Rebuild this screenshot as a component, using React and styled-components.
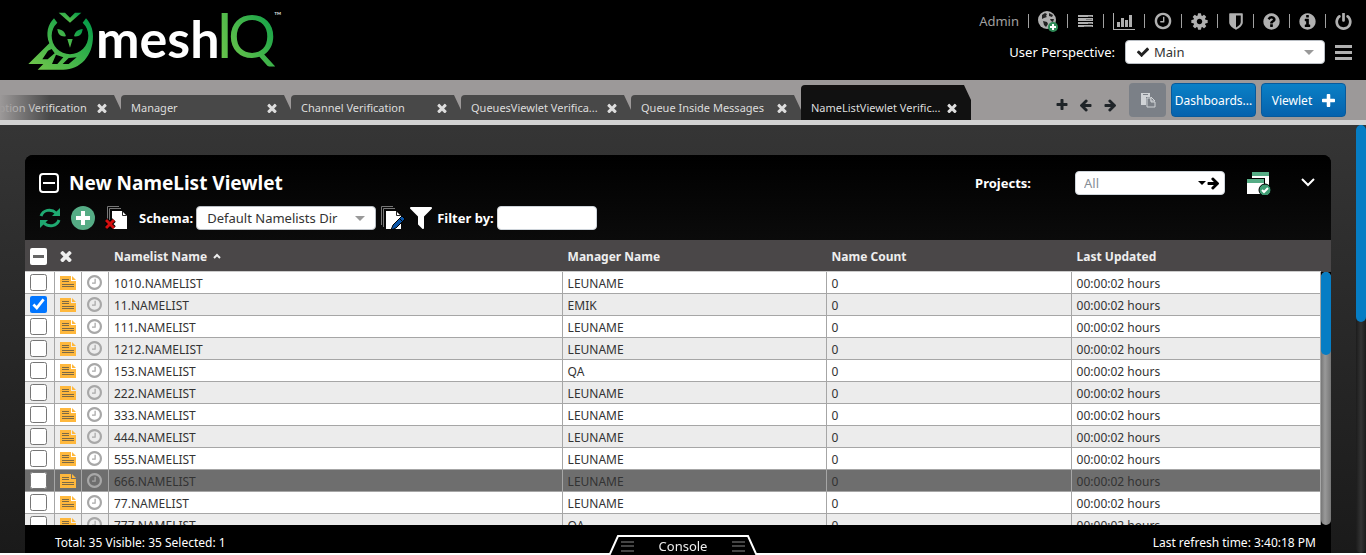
import React, { useState } from "react";
import styled, { createGlobalStyle, css } from "styled-components";

const GlobalStyle = createGlobalStyle`
  *, *::before, *::after { box-sizing: border-box; }
  html, body { margin: 0; padding: 0; background: #fff; }
  body, button, input, select {
    font-family: "Noto Sans", "Open Sans", sans-serif;
    font-size: 13px;
  }
  button { margin: 0; padding: 0; border: 0; background: none; color: inherit; cursor: pointer; }
  svg { display: block; flex: none; }
`;

/* ---------- icons ---------- */

const ICONS = {
  times: "M1490 1322q0 40-28 68l-136 136q-28 28-68 28t-68-28l-294-294-294 294q-28 28-68 28t-68-28l-136-136q-28-28-28-68t28-68l294-294-294-294q-28-28-28-68t28-68l136-136q28-28 68-28t68 28l294 294 294-294q28-28 68-28t68 28l136 136q28 28 28 68t-28 68l-294 294 294 294q28 28 28 68z",
  plus: "M1600 736v192q0 40-28 68t-68 28h-416v416q0 40-28 68t-68 28h-192q-40 0-68-28t-28-68v-416h-416q-40 0-68-28t-28-68v-192q0-40 28-68t68-28h416v-416q0-40 28-68t68-28h192q40 0 68 28t28 68v416h416q40 0 68 28t28 68z",
  check: "M1671 566q0 40-28 68l-724 724-136 136q-28 28-68 28t-68-28l-136-136-362-362q-28-28-28-68t28-68l136-136q28-28 68-28t68 28l294 295 656-657q28-28 68-28t68 28l136 136q28 28 28 68z",
  arrow: "M1664 960q0 54-37 91l-651 651q-39 37-91 37-51 0-90-37l-75-75q-38-38-38-91t38-91l293-293h-704q-52 0-84.5-37.5t-32.5-90.5v-128q0-53 32.5-90.5t84.5-37.5h704l-293-294q-38-36-38-90t38-90l75-75q38-38 90-38 53 0 91 38l651 651q37 35 37 90z",
  cog: "M1152 896q0-106-75-181t-181-75-181 75-75 181 75 181 181 75 181-75 75-181zm512-109v222q0 12-8 23t-20 13l-185 28q-19 54-39 91 35 50 107 138 10 12 10 25t-9 23q-27 37-99 108t-94 71q-12 0-26-9l-138-108q-44 23-91 38-16 136-29 186-7 28-36 28h-222q-14 0-24.5-8.5t-11.5-21.5l-28-184q-49-16-90-37l-141 107q-10 9-25 9-14 0-25-11-126-114-165-168-7-10-7-23 0-12 8-23 15-21 51-66.5t54-70.5q-27-50-41-99l-183-27q-13-2-21-12.5t-8-23.5v-222q0-12 8-23t19-13l186-28q14-46 39-92-40-57-107-138-10-12-10-24 0-10 9-23 26-36 98.5-107.5t94.5-71.5q13 0 26 10l138 107q44-23 91-38 16-136 29-186 7-28 36-28h222q14 0 24.5 8.5t11.5 21.5l28 184q49 16 90 37l142-107q9-9 24-9 13 0 25 10 129 119 165 170 7 8 7 22 0 12-8 23-15 21-51 66.5t-54 70.5q26 50 41 98l183 28q13 2 21 12.5t8 23.5z",
  power: "M1664 896q0 156-61 298t-164 245-245 164-298 61-298-61-245-164-164-245-61-298q0-182 80.5-343t226.5-270q43-32 95.5-25t83.5 50q32 42 24.5 94.5t-49.5 84.5q-98 74-151.5 181t-53.5 228q0 104 40.5 198.5t109.5 163.5 163.5 109.5 198.5 40.5 198.5-40.5 163.5-109.5 109.5-163.5 40.5-198.5q0-121-53.5-228t-151.5-181q-42-32-49.5-84.5t24.5-94.5q31-43 84-50t95 25q146 109 226.5 270t80.5 343zm-640-768v640q0 52-38 90t-90 38-90-38-38-90v-640q0-52 38-90t90-38 90 38 38 90z",
  clock: "M1024 544v448q0 14-9 23t-23 9h-320q-14 0-23-9t-9-23v-64q0-14 9-23t23-9h224v-352q0-14 9-23t23-9h64q14 0 23 9t9 23zm416 352q0-148-73-273t-198-198-273-73-273 73-198 198-73 273 73 273 198 198 273 73 273-73 198-198 73-273zm224 0q0 209-103 385.5t-279.5 279.5-385.5 103-385.5-103-279.5-279.5-103-385.5 103-385.5 279.5-279.5 385.5-103 385.5 103 279.5 279.5 103 385.5z",
  question: "M1024 1376v-192q0-14-9-23t-23-9h-192q-14 0-23 9t-9 23v192q0 14 9 23t23 9h192q14 0 23-9t9-23zm256-672q0-88-55.5-163t-138.5-116-170-41q-243 0-371 213-15 24 8 42l132 100q7 6 19 6 16 0 25-12 53-68 86-92 34-24 86-24 48 0 85.5 26t37.5 59q0 38-20 61t-68 45q-63 28-115.5 86.5t-52.5 125.5v36q0 14 9 23t23 9h192q14 0 23-9t9-23q0-19 21.5-49.5t54.5-49.5q32-18 49-28.5t46-35 44.5-48 28-60.5 12.5-81zm384 192q0 209-103 385.5t-279.5 279.5-385.5 103-385.5-103-279.5-279.5-103-385.5 103-385.5 279.5-279.5 385.5-103 385.5 103 279.5 279.5 103 385.5z",
  info: "M1152 1376v-160q0-14-9-23t-23-9h-96v-512q0-14-9-23t-23-9h-320q-14 0-23 9t-9 23v160q0 14 9 23t23 9h96v320h-96q-14 0-23 9t-9 23v160q0 14 9 23t23 9h448q14 0 23-9t9-23zm-128-896v-160q0-14-9-23t-23-9h-192q-14 0-23 9t-9 23v160q0 14 9 23t23 9h192q14 0 23-9t9-23zm640 416q0 209-103 385.5t-279.5 279.5-385.5 103-385.5-103-279.5-279.5-103-385.5 103-385.5 279.5-279.5 385.5-103 385.5 103 279.5 279.5 103 385.5z",
  shield: "M1344 960v-640h-448v1137q119-63 213-137 235-184 235-360zm192-768v768q0 86-33.5 170.5t-83 150-118 127.5-126.5 103-121 77.5-89.5 49.5-42.5 20q-12 6-26 6t-26-6q-16-7-42.5-20t-89.5-49.5-121-77.5-126.5-103-118-127.5-83-150-33.5-170.5v-768q0-26 19-45t45-19h1152q26 0 45 19t19 45z",
  filter: "M1595 295q17 41-14 70l-493 493v742q0 42-39 59-13 5-25 5-27 0-45-19l-256-256q-19-19-19-45v-486l-493-493q-31-29-14-70 17-39 59-39h1280q42 0 59 39z",
};

function Icon({ name, size = 16, box = "0 0 1792 1792", width, flip, color = "currentColor" }) {
  return (
    <svg width={width || size} height={size} viewBox={box} fill={color} aria-hidden="true">
      <path d={ICONS[name]} transform={flip ? "matrix(-1 0 0 1 1792 0)" : undefined} />
    </svg>
  );
}

const GlobeIcon = () => (
  <svg width="20" height="22" viewBox="0 0 20 22" aria-hidden="true">
    <circle cx="9" cy="10" r="9" fill="#b0b0b0" />
    <path d="M4 5l3-2 2 1-1 2 1 1-3 1-2 1zM11 3l4 2-1 2-3-1zM5 11l4 1 1 2-2 3-2-2zM12 9l4 0-1 3-2-1z" fill="#222" />
    <circle cx="15" cy="17" r="5" fill="#2e8b57" />
    <path d="M15 14v6M12 17h6" stroke="#fff" strokeWidth="2" />
  </svg>
);

const ListIcon = () => (
  <svg width="15" height="12" viewBox="0 0 15 12" aria-hidden="true">
    <path d="M0 0h15v2H0zM0 3h15v3H0zM0 7h15v2H0zM0 10h15v2H0z" fill="#b0b0b0" />
    <path d="M10 1.500h4M8 4.500h6M10 8.500h4M6 11.500h8" stroke="#777" />
  </svg>
);

const ChartIcon = () => (
  <svg width="22" height="17" viewBox="0 0 22 17" aria-hidden="true">
    <path d="M0 0h1v16h21v1H0zM4 9h3v5H4zM8 5h3v9H8zM12 7h3v7h-3zM16 2h3v12h-3z" fill="#b0b0b0" />
  </svg>
);

const BarsIcon = ({ width, height, color, thick = 3 }) => (
  <svg width={width} height={height} aria-hidden="true">
    <rect width={width} height={thick} fill={color} />
    <rect y={Math.floor((height - thick) / 2)} width={width} height={thick} fill={color} />
    <rect y={height - thick} width={width} height={thick} fill={color} />
  </svg>
);

const PasteIcon = () => (
  <svg width="16" height="16" viewBox="0 0 16 16" aria-hidden="true">
    <path d="M1 1h9v4H6v8H1z" fill="#d0d3d6" />
    <rect x="3" y="2" width="5" height="1" fill="#7b8087" />
    <path d="M7 6h4v4h4v5H7z" fill="#7b8087" stroke="#d0d3d6" />
    <path d="M11 5l4 4h-4z" fill="#7b8087" stroke="#d0d3d6" />
  </svg>
);

const CollapseIcon = () => (
  <svg width="20" height="20" viewBox="0 0 20 20" fill="none" stroke="#fff" strokeWidth="2" aria-hidden="true">
    <rect x="1" y="1" width="18" height="18" rx="3" />
    <path d="M4 10h12" />
  </svg>
);

const RefreshIcon = () => (
  <svg width="22" height="22" viewBox="0 0 22 22" aria-hidden="true">
    <path d="M2 9C4 3 12 1 17 6M20 13C18 19 10 21 5 16" fill="none" stroke="#1fa971" strokeWidth="3" />
    <path d="M21 1v8h-8zM1 21v-8h8z" fill="#1fa971" />
  </svg>
);

const AddIcon = () => (
  <svg width="24" height="24" viewBox="0 0 24 24" aria-hidden="true">
    <circle cx="12" cy="12" r="12" fill="#55ac85" />
    <path d="M12 5v14M5 12h14" stroke="#fff" strokeWidth="4" />
  </svg>
);

const Pages = () => (
  <>
    <path d="M.5 19V.5H12M2.500 21V2.500H14" fill="none" stroke="#777" />
    <path d="M5 5h10l5 5v13H5z" fill="#fff" />
    <path d="M15.500 5v4.500h4" fill="none" stroke="#222" />
  </>
);

const DeletePagesIcon = () => (
  <svg width="24" height="24" viewBox="0 0 24 24" aria-hidden="true">
    <g transform="translate(2 0)"><Pages /></g>
    <path d="M1 14l8 8M9 14l-8 8" stroke="#000" strokeWidth="5" />
    <path d="M1 14l8 8M9 14l-8 8" stroke="#d40f0f" strokeWidth="3" />
  </svg>
);

const EditPagesIcon = () => (
  <svg width="24" height="24" viewBox="0 0 24 24" aria-hidden="true">
    <Pages />
    <path d="M21 10l3 3-9 9-5 2 2-5z" fill="#0a55a8" stroke="#000" />
    <path d="M18 12l4 4" stroke="#000" />
  </svg>
);

const WindowsIcon = () => (
  <svg width="24" height="24" viewBox="0 0 24 24" aria-hidden="true">
    <rect x="5" y="1" width="17" height="14" fill="#fff" />
    <rect x="5" y="1" width="17" height="4" fill="#55ac85" />
    <rect x="0" y="7" width="18" height="16" fill="#000" />
    <rect x="0" y="8" width="17" height="15" fill="#fff" />
    <rect x="0" y="8" width="17" height="4" fill="#55ac85" />
    <circle cx="18" cy="19" r="6" fill="#3f9d74" stroke="#000" />
    <path d="M15 19l2 2 4-4" fill="none" stroke="#fff" strokeWidth="2" />
  </svg>
);

const NoteIcon = () => (
  <svg width="16" height="14" viewBox="0 0 16 14" aria-hidden="true">
    <path d="M0 0h11v5h5v9H0z" fill="#ffb83d" />
    <path d="M12 0l4 4h-4z" fill="#ffb83d" />
    <path d="M2 3.500h7M2 5.500h7M2 8.500h12M2 10.500h12" stroke="#7d6a45" />
  </svg>
);

const Logo = () => (
  <svg width="268" height="68" viewBox="0 0 268 68" role="img" aria-label="meshIQ">
    <defs>
      <linearGradient id="leaf" x1="0" y1="1" x2="1" y2="0">
        <stop offset="0" stopColor="#76c84b" />
        <stop offset="0.5" stopColor="#3db24a" />
        <stop offset="1" stopColor="#009a49" />
      </linearGradient>
      <linearGradient id="stem" x1="0" y1="1" x2="1" y2="0">
        <stop offset="0" stopColor="#76c84b" />
        <stop offset="1" stopColor="#3db24a" />
      </linearGradient>
    </defs>
    <svg x="-8" y="-6" width="80" height="70" viewBox="0 0 240 210">
      <path d="M116 23h19l15 15 15-15h19l-34 30z" fill="url(#leaf)" />
      <path
        fillRule="evenodd"
        fill="url(#leaf)"
        d="M102 40l10 13A55 55 0 1 0 188 53L198 40C211 54 219 72 219 94C219 154 180 194 130 194H53L70 177H25L88 115C76 86 84 58 102 40z
           M95 132L84 137 67 163 83 163 104 145z
           M108 149L96 177 112 177 130 157z
           M146 159L128 177 146 177 170 157z"
      />
      <path d="M112 72c14 1 23 8 26 22-14 2-24-4-26-22zM188 72c-14 1-23 8-26 22 14 2 24-4 26-22zM142 102h16l-8 26z" fill="url(#leaf)" />
    </svg>
    <text x="68" y="47" fill="#fff" fontFamily="Lato, sans-serif" fontWeight="700" fontSize="52">mesh</text>
    <text x="188" y="47" fill="url(#stem)" fontFamily="Lato, sans-serif" fontSize="62">I</text>
    <text x="200" y="47" fill="url(#leaf)" fontFamily="Lato, sans-serif" fontSize="60">Q</text>
    <text x="246" y="8" fill="#ddd" fontFamily="Lato, sans-serif" fontSize="10">™</text>
  </svg>
);

/* ---------- page frame ---------- */

const Page = styled.div`
  display: flex;
  flex-direction: column;
  height: calc(100vh - 2px);
  min-width: 1100px;
  background: linear-gradient(#3d3d3d, #1a1a1a);
`;

const Header = styled.header`
  display: flex;
  flex: none;
  justify-content: space-between;
  height: 80px;
  padding: 11px 14px 0 28px;
  background: #000;
`;

const HeaderSide = styled.div`
  display: flex;
  flex-direction: column;
  align-items: flex-end;
  gap: 9px;
`;

const IconBar = styled.nav`
  display: flex;
  align-items: center;
  gap: 9px;
  height: 20px;
  color: #b0b0b0;
`;

const UserName = styled.span`
  color: #a0a0a0;
  font-size: 13px;
`;

const Divider = styled.span`
  width: 1px;
  height: 14px;
  background: #a0a0a0;
`;

const IconButton = styled.button`
  display: flex;
  align-items: center;
  justify-content: center;
  flex: none;
`;

const ToolButton = styled(IconButton)`
  min-width: 17px;
`;

const Perspective = styled.div`
  display: flex;
  align-items: center;
  gap: 10px;
  color: #fff;
  font-size: 13px;
`;

const SelectBox = styled.div`
  display: flex;
  align-items: center;
  gap: 4px;
  width: ${(p) => p.$width};
  height: 24px;
  padding: 0 10px;
  border: 1px solid #b9bec4;
  border-radius: 4px;
  background: #fff;
  color: #222;
`;

const Select = styled.select`
  flex: 1;
  min-width: 0;
  padding: 0;
  border: 0;
  outline: 0;
  appearance: none;
  background: transparent;
  color: #333;
`;

const Caret = styled.span`
  border: 5px solid transparent;
  border-top-color: #999;
  border-bottom: 0;
`;

/* ---------- tab strip ---------- */

const TabBar = styled.div`
  display: flex;
  flex: none;
  justify-content: space-between;
  height: 45px;
  border-bottom: 5px solid #d2d2d2;
  background: #9c9999;
`;

const TabStrip = styled.div`
  display: flex;
  position: relative;
  flex: 0 1 971px;
  align-items: flex-end;
  justify-content: flex-end;
  overflow: hidden;

  &::before {
    content: "";
    position: absolute;
    z-index: 1;
    inset: 0 auto 0 0;
    width: 50px;
    background: linear-gradient(90deg, #9c9999, transparent);
  }
`;

const Tab = styled.div`
  display: flex;
  flex: none;
  align-items: center;
  justify-content: space-between;
  width: 170px;
  height: ${(p) => (p.$active ? 35 : 25)}px;
  padding: ${(p) => (p.$active ? 10 : 0)}px 14px 0 10px;
  border-radius: 4px 0 0 0;
  clip-path: polygon(0 0, calc(100% - 7px) 0, 100% 15px, 100% 100%, 0 100%);
  background: ${(p) => (p.$active ? "#111" : "#484848")};
  color: #ddd;
`;

const TabName = styled.button`
  font-size: 11px;
  white-space: nowrap;
`;

const TabActions = styled.div`
  display: flex;
  align-items: center;
  gap: 5px;
  padding-right: 20px;
  color: #1f2428;
`;

const TabNav = styled.div`
  display: flex;
  align-items: center;
  gap: 10px;
  padding: 10px 7px 0 0;
`;

const ActionButton = styled.button`
  display: flex;
  align-items: center;
  justify-content: center;
  gap: 10px;
  width: ${(p) => p.$width}px;
  height: 34px;
  border-radius: 4px;
  color: #fff;
  font-size: 12px;
  white-space: nowrap;
  ${(p) =>
    p.$muted
      ? css`background: #7b8087;`
      : css`
          border: 1px solid #075a9c;
          background: linear-gradient(#0a80c6, #0562ad);
        `}
`;

/* ---------- viewlet ---------- */

const Workspace = styled.div`
  display: flex;
  flex: 1;
  min-height: 0;
`;

const Canvas = styled.main`
  display: flex;
  flex: 1;
  min-width: 0;
  padding: 30px 25px 0;
`;

const ScrollTrack = styled.div`
  flex: ${(p) => (p.$fill ? "1" : "none")};
  width: 10px;
  border-radius: 5px;
  background: ${(p) => (p.$light ? "linear-gradient(90deg, #777, #999 40%, #777)" : "linear-gradient(90deg, #1c1c1c, #333 50%, #1c1c1c)")};
`;

const ScrollThumb = styled.div`
  height: ${(p) => p.$size};
  border-radius: 5px;
  background: #067dc4;
`;

const Viewlet = styled.section`
  display: flex;
  flex: 1;
  flex-direction: column;
  min-width: 0;
  border-radius: 8px 8px 0 0;
  overflow: hidden;
  background: #000;
`;

const ViewletHead = styled.div`
  display: flex;
  flex: none;
  flex-direction: column;
  gap: 10px;
  height: 85px;
  padding: 15px 15px 0 14px;
  background: linear-gradient(#000, #0b0b0b);
  color: #fff;
`;

const TitleRow = styled.div`
  display: flex;
  align-items: center;
  gap: 10px;
  height: 26px;
`;

const Title = styled.h1`
  flex: 1;
  margin: 0;
  font-size: 19px;
  line-height: 26px;
`;

const ProjectBox = styled.div`
  display: flex;
  align-items: center;
  width: 150px;
  height: 24px;
  margin: 0 12px 0 34px;
  padding: 0 4px 0 8px;
  border: 1px solid #ced4da;
  border-radius: 4px;
  background: #fff;
  color: #000;
`;

const ProjectInput = styled.input`
  flex: 1;
  min-width: 0;
  padding: 0;
  border: 0;
  outline: 0;
  background: transparent;

  &::placeholder { color: #868e96; }
`;

const SmallCaret = styled(Caret)`
  border-width: 4px 4px 0;
  border-top-color: #000;
`;

const Spacer = styled.span`
  width: 9px;
`;

const Toolbar = styled.div`
  display: flex;
  align-items: center;
  gap: 10px;
  height: 24px;
`;

const ToolGroup = styled.div`
  display: flex;
  align-items: center;
  gap: 5px;
`;

const Field = styled.div`
  display: flex;
  align-items: center;
  gap: 3px;
`;

const Label = styled.label`
  font-size: 13px;
  font-weight: 700;
  white-space: nowrap;
`;

const FilterInput = styled.input`
  width: 100px;
  height: 24px;
  border: 1px solid #ced4da;
  border-radius: 4px;
  background: #fff;
`;

const TableArea = styled.div`
  display: flex;
  flex: 1;
  min-height: 0;
  overflow: hidden;
`;

const Table = styled.table`
  flex: 1;
  align-self: flex-start;
  table-layout: fixed;
  min-width: 0;
  border-collapse: separate;
  border-spacing: 0;
`;

const HeadCell = styled.th`
  height: 32px;
  padding: 1px 5px 0;
  border-bottom: 1px solid #ccc;
  background: #4a4748;
  color: #eee;
  font-size: 12px;
  font-weight: 700;
  text-align: left;
  white-space: nowrap;
`;

const SortLabel = styled.span`
  display: flex;
  align-items: center;
  gap: 6px;
`;

const Row = styled.tr`
  background: ${(p) => (p.$current ? "#6e6e6e" : "#fff")};
  ${(p) => !p.$current && css`&:nth-child(even) { background: #ececec; }`}
`;

const Cell = styled.td`
  height: 22px;
  padding: 2px 5px 0;
  border-right: 1px solid #a6a6a6;
  border-bottom: 1px solid #a6a6a6;
  color: #333;
  font-size: 12px;
  line-height: 19px;
  white-space: nowrap;
`;

const IconCell = styled(Cell)`
  padding: 0 5px;
`;

const Tick = styled.input`
  display: block;
  width: 17px;
  height: 17px;
  margin: 0;
`;

const PartialTick = styled(Tick)`
  display: flex;
  align-items: center;
  justify-content: center;
  appearance: none;
  border-radius: 2px;
  background: #fff;

  &::before {
    content: "";
    width: 11px;
    height: 3px;
    background: #666;
  }
`;

const TableRail = styled.div`
  display: flex;
  flex: none;
  flex-direction: column;
  width: 10px;
`;

const RailCap = styled.div`
  flex: none;
  height: 32px;
  background: #4a4748;
`;

const Footer = styled.footer`
  display: flex;
  flex: none;
  align-items: center;
  justify-content: space-between;
  height: 28px;
  padding: 6px 15px 0 30px;
  color: #fff;
  font-size: 12px;
`;

const ConsoleButton = styled.button`
  display: flex;
  position: fixed;
  bottom: 0;
  left: 50%;
  align-items: center;
  justify-content: space-between;
  width: 150px;
  height: 20px;
  padding: 2px 13px 0;
  transform: translateX(-50%);
  color: #eee;
  font-size: 13px;
  line-height: 18px;
`;

const ConsoleShape = styled.svg`
  position: absolute;
  z-index: -1;
  inset: 0;
`;

const tabs = [
  "Subscription Verification",
  "Manager",
  "Channel Verification",
  "QueuesViewlet Verifica...",
  "Queue Inside Messages",
  "NameListViewlet Verific...",
];

const tools = [
  ["Add location", <GlobeIcon />],
  ["Lists", <ListIcon />],
  ["Charts", <ChartIcon />],
  ["History", <Icon name="clock" size={18} box="64 64 1664 1664" />],
  ["Settings", <Icon name="cog" size={17} box="96 96 1600 1600" />],
  ["Security", <Icon name="shield" width={14} size={17} box="256 96 1280 1600" />],
  ["Help", <Icon name="question" size={17} box="96 96 1600 1600" />],
  ["About", <Icon name="info" size={17} box="96 96 1600 1600" />],
  ["Log out", <Icon name="power" size={17} box="96 64 1600 1600" />],
];

const rows = [
  ["1010", "LEUNAME"],
  ["11", "EMIK"],
  ["111", "LEUNAME"],
  ["1212", "LEUNAME"],
  ["153", "QA"],
  ["222", "LEUNAME"],
  ["333", "LEUNAME"],
  ["444", "LEUNAME"],
  ["555", "LEUNAME"],
  ["666", "LEUNAME"],
  ["77", "LEUNAME"],
  ["777", "QA"],
];

export default function App() {
  const [selected, setSelected] = useState({ 11: true });

  return (
    <>
      <GlobalStyle />
      <Page>
        <Header>
          <Logo />
          <HeaderSide>
            <IconBar aria-label="Tools">
              <UserName>Admin</UserName>
              {tools.map(([label, icon]) => (
                <React.Fragment key={label}>
                  <Divider />
                  <ToolButton aria-label={label}>{icon}</ToolButton>
                </React.Fragment>
              ))}
            </IconBar>
            <Perspective>
              <label htmlFor="perspective">User Perspective:</label>
              <SelectBox $width="200px">
                <Icon name="check" size={14} />
                <Select id="perspective"><option>Main</option></Select>
                <Caret />
              </SelectBox>
              <IconButton aria-label="Menu"><BarsIcon width={17} height={15} color="#b0b0b0" /></IconButton>
            </Perspective>
          </HeaderSide>
        </Header>

        <TabBar>
          <TabStrip>
            {tabs.map((name, i) => (
              <Tab key={name} $active={i === tabs.length - 1}>
                <TabName>{name}</TabName>
                <IconButton aria-label={`Close ${name}`}><Icon name="times" size={10} box="256 256 1280 1280" /></IconButton>
              </Tab>
            ))}
          </TabStrip>
          <TabActions>
            <TabNav>
              <IconButton aria-label="Add tab"><Icon name="plus" size={14} /></IconButton>
              <IconButton aria-label="Previous tab"><Icon name="arrow" size={14} flip /></IconButton>
              <IconButton aria-label="Next tab"><Icon name="arrow" size={14} /></IconButton>
            </TabNav>
            <ActionButton $width={37} $muted aria-label="Paste"><PasteIcon /></ActionButton>
            <ActionButton $width={85}>Dashboards...</ActionButton>
            <ActionButton $width={85}>
              Viewlet
              <Icon name="plus" size={13} box="192 128 1408 1408" />
            </ActionButton>
          </TabActions>
        </TabBar>

        <Workspace>
          <Canvas>
            <Viewlet>
              <ViewletHead>
                <TitleRow>
                  <IconButton aria-label="Collapse"><CollapseIcon /></IconButton>
                  <Title>New NameList Viewlet</Title>
                  <Label htmlFor="projects">Projects:</Label>
                  <ProjectBox>
                    <ProjectInput id="projects" placeholder="All" />
                    <SmallCaret />
                    <IconButton aria-label="Apply project"><Icon name="arrow" size={14} /></IconButton>
                  </ProjectBox>
                  <IconButton aria-label="Windows"><WindowsIcon /></IconButton>
                  <Spacer />
                  <IconButton aria-label="Options">
                    <svg width="16" height="10" viewBox="0 0 16 10" fill="none" stroke="#fff" strokeWidth="2" aria-hidden="true">
                      <path d="M2 1l6 6 6-6" />
                    </svg>
                  </IconButton>
                </TitleRow>
                <Toolbar>
                  <IconButton aria-label="Refresh"><RefreshIcon /></IconButton>
                  <IconButton aria-label="Add"><AddIcon /></IconButton>
                  <IconButton aria-label="Delete schema"><DeletePagesIcon /></IconButton>
                  <ToolGroup>
                    <Field>
                      <Label htmlFor="schema">Schema:</Label>
                      <SelectBox $width="180px">
                        <Select id="schema"><option>Default Namelists Dir</option></Select>
                        <Caret />
                      </SelectBox>
                    </Field>
                    <IconButton aria-label="Edit schema"><EditPagesIcon /></IconButton>
                    <IconButton aria-label="Filter"><Icon name="filter" size={22} box="192 256 1408 1408" /></IconButton>
                    <Field>
                      <Label htmlFor="filter">Filter by:</Label>
                      <FilterInput id="filter" />
                    </Field>
                  </ToolGroup>
                </Toolbar>
              </ViewletHead>

              <TableArea>
                <Table>
                  <colgroup>
                    <col width="30" />
                    <col width="27" />
                    <col width="27" />
                    <col width="35%" />
                    <col width="264" />
                    <col width="245" />
                    <col />
                  </colgroup>
                  <thead>
                    <tr>
                      <HeadCell><PartialTick type="checkbox" aria-label="Select all" /></HeadCell>
                      <HeadCell><IconButton aria-label="Clear"><Icon name="times" size={12} box="256 256 1280 1280" /></IconButton></HeadCell>
                      <HeadCell aria-label="History" />
                      <HeadCell>
                        <SortLabel>
                          Namelist Name
                          <svg width="8" height="6" viewBox="0 0 8 6" fill="none" stroke="#eee" strokeWidth="2" aria-hidden="true">
                            <path d="M1 5l3-3 3 3" />
                          </svg>
                        </SortLabel>
                      </HeadCell>
                      <HeadCell>Manager Name</HeadCell>
                      <HeadCell>Name Count</HeadCell>
                      <HeadCell>Last Updated</HeadCell>
                    </tr>
                  </thead>
                  <tbody>
                    {rows.map(([id, manager]) => (
                      <Row key={id} $current={id === "666"}>
                        <IconCell>
                          <Tick
                            type="checkbox"
                            aria-label={`Select ${id}.NAMELIST`}
                            checked={!!selected[id]}
                            onChange={() => setSelected((s) => ({ ...s, [id]: !s[id] }))}
                          />
                        </IconCell>
                        <IconCell><NoteIcon /></IconCell>
                        <IconCell><Icon name="clock" size={15} box="128 128 1536 1536" color="#a8a8a8" /></IconCell>
                        <Cell>{id}.NAMELIST</Cell>
                        <Cell>{manager}</Cell>
                        <Cell>0</Cell>
                        <Cell>00:00:02 hours</Cell>
                      </Row>
                    ))}
                  </tbody>
                </Table>
                <TableRail>
                  <RailCap />
                  <ScrollTrack $light $fill><ScrollThumb $size="83px" /></ScrollTrack>
                </TableRail>
              </TableArea>

              <Footer>
                <span>Total: 35 Visible: 35 Selected: 1</span>
                <span>Last refresh time: 3:40:18 PM</span>
              </Footer>
            </Viewlet>
          </Canvas>
          <ScrollTrack><ScrollThumb $size="46%" /></ScrollTrack>
        </Workspace>

        <ConsoleButton>
          <ConsoleShape width="150" height="20" viewBox="0 0 150 20" aria-hidden="true">
            <path d="M1 21L10 1H140L149 21z" fill="#000" stroke="#fff" strokeWidth="2" />
          </ConsoleShape>
          <BarsIcon width={13} height={11} color="#444" thick={2} />
          Console
          <BarsIcon width={13} height={11} color="#444" thick={2} />
        </ConsoleButton>
      </Page>
    </>
  );
}
